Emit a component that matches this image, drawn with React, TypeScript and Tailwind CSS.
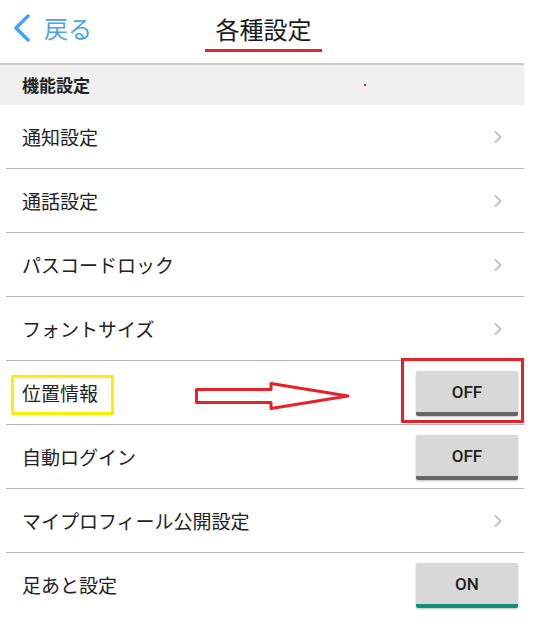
const font = { fontFamily: '"Noto Sans CJK JP", "Noto Sans", sans-serif' }

type Row = { label: string; kind: 'link' | 'off' | 'on'; note?: boolean }

const rows: Row[] = [
  { label: '通知設定', kind: 'link' },
  { label: '通話設定', kind: 'link' },
  { label: 'パスコードロック', kind: 'link' },
  { label: 'フォントサイズ', kind: 'link' },
  { label: '位置情報', kind: 'off', note: true },
  { label: '自動ログイン', kind: 'off' },
  { label: 'マイプロフィール公開設定', kind: 'link' },
  { label: '足あと設定', kind: 'on' },
]

function Chevron() {
  return (
    <svg width="10" height="14" viewBox="0 0 10 14" className="mr-[21px]">
      <path d="M2 1.5 L7.5 7 L2 12.5" fill="none" stroke="#c4c4c4" strokeWidth="2.2" />
    </svg>
  )
}

function Toggle({ on }: { on: boolean }) {
  return (
    <div
      className={`mr-[6px] mt-[2px] flex h-[45px] w-[102px] items-center justify-center rounded-[2px] bg-[#d8d8d8] pt-[3px] text-[17px] font-medium text-[#222] shadow-[0_1px_2px_rgba(0,0,0,0.25)] border-b-[4px] ${on ? 'border-[#138f79]' : 'border-[#666666]'}`}
      style={{ fontFamily: 'Roboto, "Noto Sans", sans-serif' }}
    >
      {on ? 'ON' : 'OFF'}
    </div>
  )
}

export default function App() {
  return (
    <div className="relative h-[622px] w-[550px] overflow-hidden bg-white text-[#222]" style={font}>
      <div className="w-[524px]">
        <header className="relative flex h-[63px] items-center">
          <div className="flex items-center pl-[13px] pb-[8px]">
            <svg width="18" height="28" viewBox="0 0 18 28">
              <path d="M15 2 L3 14 L15 26" fill="none" stroke="#44a3ee" strokeWidth="3.5" strokeLinecap="round" strokeLinejoin="round" />
            </svg>
            <span className="ml-[13px] text-[24px] leading-none text-[#4aa5ee]">戻る</span>
          </div>
          <div className="absolute left-[205px] top-[12px] flex w-[117px] flex-col items-center">
            <span className="text-[24px] leading-[34px] text-[#1a1a1a]">各種設定</span>
            <span className="mt-[3px] h-[3px] w-full bg-[#e8202a]" />
          </div>
        </header>
        <div className="h-[2px] bg-[#c8c8c8]" />
        <div className="flex h-[40px] items-center bg-[#f0f0f0] pl-[22px] text-[17px] font-bold">機能設定</div>
        {rows.map((r, i) => (
          <div key={r.label}>
            <div className="flex h-[63px] items-center justify-between">
              <span className="pl-[22px] pt-[2px] text-[19px]">{r.label}</span>
              {r.kind === 'link' ? <Chevron /> : <Toggle on={r.kind === 'on'} />}
            </div>
            {i < rows.length - 1 && <div className="ml-[6px] h-px bg-[#b4b4b4]" />}
          </div>
        ))}
      </div>

      {/* annotations */}
      <div className="absolute left-[364px] top-[84px] h-[2px] w-[2px] bg-[#e8202a]" />
      <div className="absolute left-[11px] top-[375px] h-[40px] w-[103px] border-[3px] border-[#ffee00]" />
      <div className="absolute left-[401px] top-[358px] h-[65px] w-[123px] border-[3px] border-[#e8202a]" />
      <svg className="absolute left-[194px] top-[381px]" width="158" height="30" viewBox="0 0 158 30">
        <path d="M2.5 8.5 H77 V2.5 L154 15 L77 27.5 V21.5 H2.5 Z" fill="none" stroke="#e8202a" strokeWidth="3" strokeLinejoin="round" />
      </svg>
    </div>
  )
}
